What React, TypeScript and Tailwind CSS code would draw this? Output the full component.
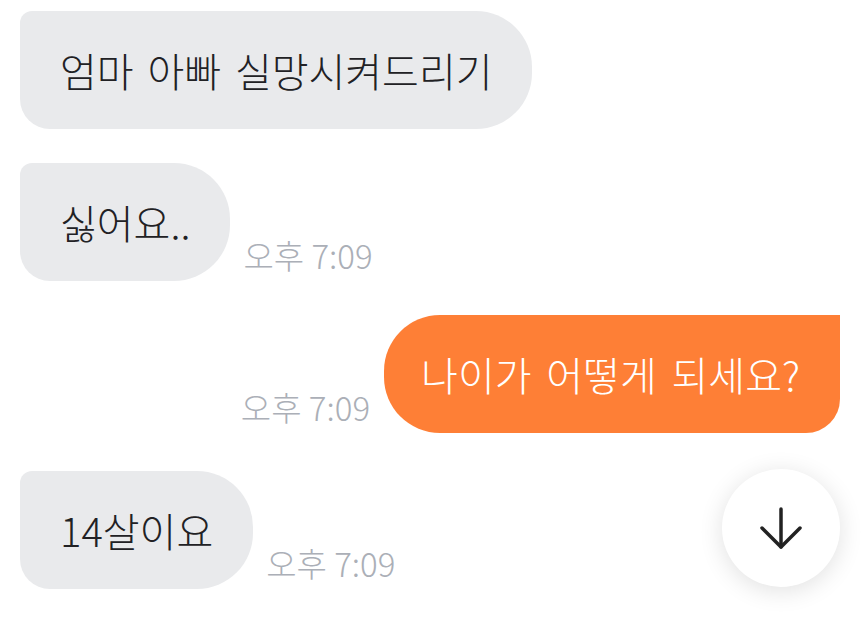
import React from "react";

const font = { fontFamily: '"Noto Sans CJK KR", "Noto Sans", sans-serif' };

function Time() {
  return (
    <span className="mb-[8px] shrink-0 self-end text-[33px] leading-[36px] font-light text-[#abafb7]">
      오후 7:09
    </span>
  );
}

function Received({ text, time }: { text: string; time?: boolean }) {
  return (
    <div className="flex items-end gap-[13px]">
      <div className="rounded-tl-[12px] rounded-bl-[30px] rounded-r-[56px] bg-[#e9eaec] px-10 py-[35px] text-[40px] leading-[48px] font-light text-[#212124] [word-spacing:5px]">
        {text}
      </div>
      {time && <Time />}
    </div>
  );
}

export default function App() {
  return (
    <div className="relative h-[625px] w-[864px] overflow-hidden bg-white pl-5 pr-6 pt-[11px]" style={font}>
      <div className="flex flex-col">
        <Received text="엄마 아빠 실망시켜드리기" />
        <div className="mt-[34px]">
          <Received text="싫어요.." time />
        </div>

        <div className="mt-[34px] flex items-end justify-end gap-[14px]">
          <Time />
          <div className="rounded-l-[56px] rounded-tr-none rounded-br-[34px] bg-[#fe7f36] py-[35px] pl-[37px] pr-10 text-[40px] leading-[48px] font-light text-white [word-spacing:6px]">
            나이가 어떻게 되세요?
          </div>
        </div>

        <div className="mt-[38px]">
          <Received text="14살이요" time />
        </div>
      </div>

      {/* scroll to bottom */}
      <button className="absolute left-[722px] top-[469px] flex h-[118px] w-[118px] items-center justify-center rounded-full bg-white shadow-[0_4px_24px_rgba(0,0,0,0.12)]">
        <svg width="44" height="44" viewBox="0 0 44 44" fill="none" stroke="#222" strokeWidth="3.5" strokeLinecap="round" strokeLinejoin="round">
          <path d="M22 3v38" />
          <path d="M3 22l19 19 19-19" />
        </svg>
      </button>
    </div>
  );
}
